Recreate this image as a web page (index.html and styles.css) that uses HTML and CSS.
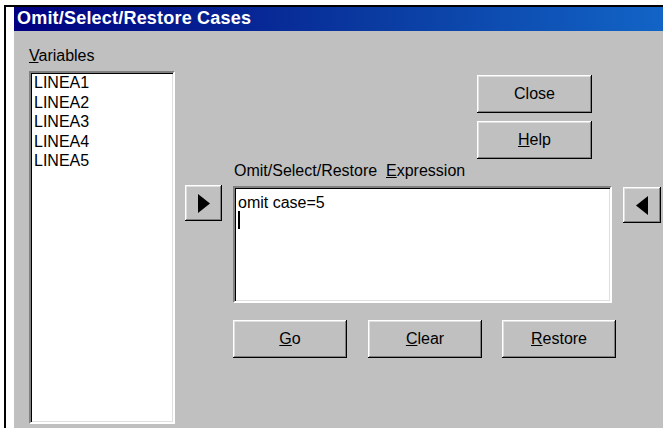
FILE: index.html
```html
<!DOCTYPE html>
<html lang="en">
<head>
<meta charset="utf-8">
<title>Omit/Select/Restore Cases</title>
<link rel="stylesheet" href="styles.css">
</head>
<body>
<div class="window">
  <div class="dialog">
    <div class="titlebar">Omit/Select/Restore Cases</div>
    <div class="client">
      <div class="varcol">
        <div class="label"><u>V</u>ariables</div>
        <div class="listbox sunken">
          <div class="item">LINEA1</div>
          <div class="item">LINEA2</div>
          <div class="item">LINEA3</div>
          <div class="item">LINEA4</div>
          <div class="item">LINEA5</div>
        </div>
      </div>
      <div class="work">
        <div class="cmds">
          <button class="btn cmd">Close</button>
          <button class="btn cmd"><u>H</u>elp</button>
        </div>
        <div class="label exprlabel">Omit/Select/Restore  <u>E</u>xpression</div>
        <button class="btn arrow arrow-in" aria-label="Add variable">
          <svg width="12" height="19" viewBox="0 0 12 19"><polygon points="0,0 12,9.5 0,19" fill="#000"/></svg>
        </button>
        <div class="exprbox sunken">
          <div class="exprtext">omit case=5</div>
          <span class="caret"></span>
        </div>
        <button class="btn arrow arrow-out" aria-label="Remove">
          <svg width="12" height="19" viewBox="0 0 12 19"><polygon points="12,0 0,9.5 12,19" fill="#000"/></svg>
        </button>
        <div class="actions">
          <button class="btn act"><u>G</u>o</button>
          <button class="btn act"><u>C</u>lear</button>
          <button class="btn act"><u>R</u>estore</button>
        </div>
      </div>
    </div>
  </div>
</div>
</body>
</html>
```
FILE: styles.css
```css
html, body {
  margin: 0;
  padding: 0;
  background: #fff;
}

body {
  width: 663px;
  height: 428px;
  overflow: hidden;
  font-family: "Liberation Sans", Arial, sans-serif;
  font-size: 16px;
  color: #000;
}

.window {
  box-sizing: border-box;
  margin: 5px 0 0 4px;
  height: 423px;
  border-top: 2px solid #000;
  border-left: 2px solid #000;
  padding-left: 8px;
  background: #fff;
  display: flex;
  flex-direction: column;
}

.dialog {
  flex: 1;
  display: flex;
  flex-direction: column;
  background: #c0c0c0;
  min-height: 0;
}

.titlebar {
  height: 24px;
  line-height: 23px;
  padding-left: 3px;
  background: linear-gradient(to right, #000080 0%, #0a3aa0 55%, #1264c6 100%);
  color: #fff;
  font-weight: bold;
  font-size: 18px;
  letter-spacing: 0.2px;
  white-space: nowrap;
}

.client {
  flex: 1;
  display: flex;
  padding: 16px 0 4px 15px;
  min-height: 0;
}

.label {
  line-height: 18px;
  white-space: pre;
}

u {
  text-underline-offset: 1px;
}

/* sunken field border */
.sunken {
  box-sizing: border-box;
  background: #fff;
  border-style: solid;
  border-width: 2px;
  border-color: #808080 #fff #fff #808080;
  box-shadow: inset 1px 1px 0 #000, inset -1px -1px 0 #dfdfdf;
}

.varcol {
  width: 146px;
  display: flex;
  flex-direction: column;
}

.varcol .label {
  margin-bottom: 6px;
}

.listbox {
  flex: 1;
  padding: 0 0 0 3px;
}

.item {
  line-height: 19.5px;
}

.work {
  margin-left: 10px;
  display: grid;
  grid-template-columns: 38px 10px 379px 11px 38px;
  grid-template-rows: auto auto auto auto;
  align-content: start;
}

.btn {
  box-sizing: border-box;
  margin: 0;
  padding: 0;
  background: #c0c0c0;
  border: 0;
  font: inherit;
  color: #000;
  box-shadow:
    inset -1px -1px 0 #000,
    inset 1px 1px 0 #fff,
    inset -2px -2px 0 #808080,
    inset 2px 2px 0 #dfdfdf;
  display: flex;
  align-items: center;
  justify-content: center;
}

.cmds {
  grid-column: 3;
  grid-row: 1;
  justify-self: end;
  margin: 28px 20px 0 0;
  display: flex;
  flex-direction: column;
  gap: 8px;
}

.cmd {
  width: 115px;
  height: 38px;
}

.exprlabel {
  grid-column: 3 / 6;
  grid-row: 2;
  margin-top: 3px;
  padding-left: 1px;
}

.arrow {
  width: 38px;
  height: 36px;
  align-self: start;
  margin-top: 6px;
}

.arrow-in {
  grid-column: 1;
  grid-row: 3;
  width: 37px;
  margin-top: 5px;
}

.arrow-out {
  grid-column: 5;
  grid-row: 3;
  margin-top: 7px;
}

.exprbox {
  grid-column: 3;
  grid-row: 3;
  margin-top: 6px;
  height: 117px;
  padding: 6px 0 0 3px;
}

.exprtext {
  line-height: 18px;
}

.caret {
  display: block;
  width: 2px;
  height: 18px;
  margin-top: -1px;
  background: #000;
}

.actions {
  grid-column: 3 / 6;
  grid-row: 4;
  margin-top: 17px;
  display: flex;
  gap: 21px;
}

.act {
  width: 114px;
  height: 38px;
}

.act + .act + .act {
  margin-left: -1px;
}
```
